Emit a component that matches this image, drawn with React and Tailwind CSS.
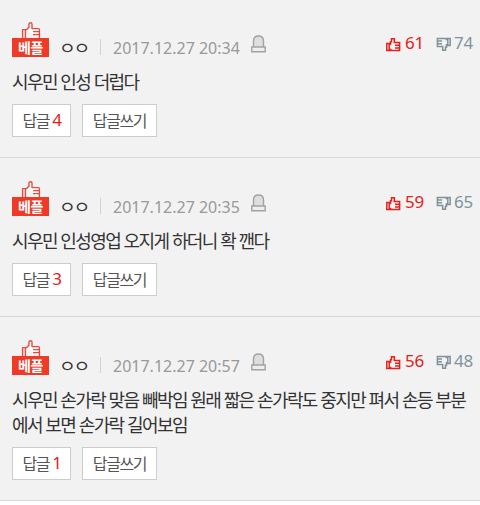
import React from 'react';

const comments = [
    { id: 1, author: 'ㅇㅇ', date: '2017.12.27 20:34', up: 61, down: 74, replies: 4, lines: ['시우민 인성 더럽다'] },
    { id: 2, author: 'ㅇㅇ', date: '2017.12.27 20:35', up: 59, down: 65, replies: 3, lines: ['시우민 인성영업 오지게 하더니 확 깬다'] },
    {
        id: 3, author: 'ㅇㅇ', date: '2017.12.27 20:57', up: 56, down: 48, replies: 1,
        lines: ['시우민 손가락 맞음 빼박임 원래 짧은 손가락도 중지만 펴서 손등 부분', '에서 보면 손가락 길어보임']
    },
];

const BestBadge = () => (
    <div className="w-[37px] flex flex-col items-center">
        <svg className="w-[20px] h-[16px] shrink-0" viewBox="0 0 20 16" fill="none" stroke="#e8493a" strokeWidth="1.4" strokeLinejoin="round">
            <path fill="#fff" d="M1.6 16V7.6h2.8V16M4.4 7.6h1.2L8 5.2V2.3Q8 .8 9.5.8T11 2.3v4.3h6.2q1.2 0 1.2 1.2V16" />
            <path d="M12 9.6h6.4M12 12.6h6.4" />
        </svg>
        <div className="w-full h-[19px] bg-[#ee3a26] text-white text-[14px] leading-[18px] font-bold text-center tracking-[-0.5px]">베플</div>
    </div>
);

const Thumb = ({ down }) => (
    <svg className={`w-[15px] h-[15px] ${down ? 'rotate-180' : ''}`} viewBox="0 0 15 15" fill="none" stroke="currentColor" strokeWidth="1.5">
        <path d="M.8 6.5h2.4v7H.8zM3.2 7.2h1.3V4.8h1V1.8h2.8v3.8h5.3v8H4.6v-1H3.2" />
        <path d="M9 8.3h4.6M9 10.9h4.6" />
    </svg>
);

const ReportIcon = () => (
    <svg className="w-[15px] h-[18px]" viewBox="0 0 15 18" fill="#dedede" stroke="#a2a2a2" strokeWidth="1.4">
        <path d="M2.5 12V6Q2.5 1 7.5 1t5 5v6" />
        <path fill="#eee" d="M.8 12h13.4v4.7H.8z" />
    </svg>
);

const Comment = ({ comment }) => (
    <li className="bg-[#f2f2f2] border-b border-[#d8d8d8] pt-[23px] px-3 pb-[20px]">
        <div className="flex items-start justify-between h-[35px]">
            <div className="flex items-start">
                <BestBadge />
                <span className="ml-[10px] mt-[13px] w-[28px] origin-left scale-x-[1.14] text-[16px] leading-[24px] tracking-[-2px] text-[#333]">{comment.author}</span>
                <span className="ml-[13px] mt-[17px] w-px h-[16px] bg-[#d2d2d2]" />
                <span className="ml-[12px] mt-[14px] font-['Noto_Sans'] text-[16px] leading-[24px] text-[#999]">{comment.date}</span>
                <span className="ml-[11px] mt-[13px]"><ReportIcon /></span>
            </div>
            <div className="-mr-[5px] mt-[9px] flex items-start font-['Noto_Sans'] text-[17px] leading-[24px] tracking-[-0.2px]">
                <span className="flex text-[#e5201b]">
                    <span className="mt-[6px] mr-[4px]"><Thumb /></span>
                    {comment.up}
                </span>
                <span className="flex ml-[12px] text-[#7f929c]">
                    <span className="mt-[6px] mr-[3px]"><Thumb down /></span>
                    {comment.down}
                </span>
            </div>
        </div>
        <p className="mt-[12px] text-[18px] leading-[25px] tracking-[-1.6px] [word-spacing:1px] text-[#333] whitespace-nowrap">
            {comment.lines.map(line => <span key={line} className="block">{line}</span>)}
        </p>
        <div className="mt-[10px] flex gap-[11px] text-[16px] leading-[30px] tracking-[-1.4px] text-[#555]">
            <button className="w-[59px] h-[33px] pb-[2px] flex items-center justify-center bg-white border border-[#ccc]">
                답글
                <span className="ml-[3px] font-['Noto_Sans'] text-[17px] text-[#e5201b]">{comment.replies}</span>
            </button>
            <button className="w-[75px] h-[33px] pb-[2px] flex items-center justify-center bg-white border border-[#ccc]">답글쓰기</button>
        </div>
    </li>
);

const App = () => (
    <div className="w-[480px] h-[505px] overflow-hidden bg-white font-['Noto_Sans_CJK_KR',sans-serif]">
        <ul className="-mt-px">
            {comments.map(comment => <Comment key={comment.id} comment={comment} />)}
        </ul>
    </div>
);

export default App;
